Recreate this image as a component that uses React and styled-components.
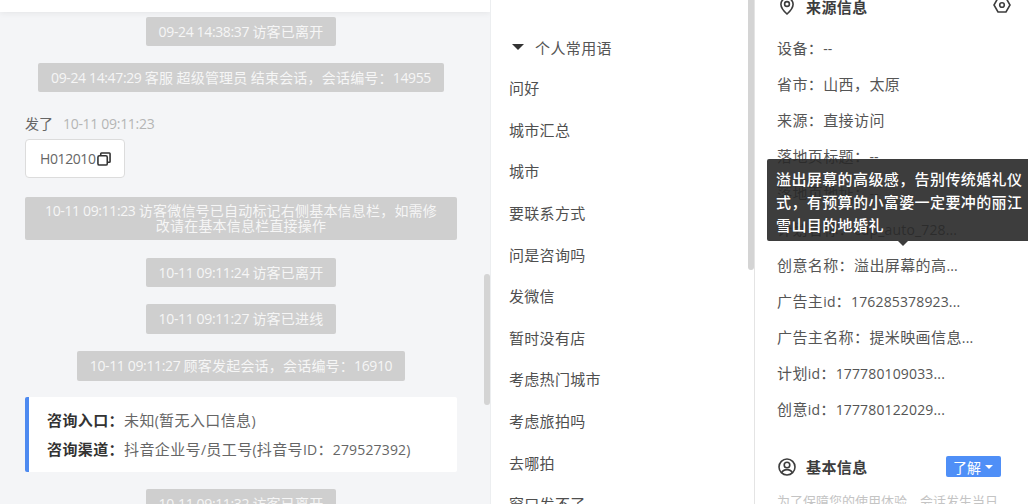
import React from "react";
import styled, { createGlobalStyle } from "styled-components";

const Global = createGlobalStyle`
  html, body { margin: 0; padding: 0; height: 504px; overflow: hidden; background: #fff; }
  #root { height: 504px; }
  * { box-sizing: border-box; }
`;
const FONT = `"Open Sans", "Noto Sans CJK SC", sans-serif`;

const Page = styled.div`
  display: flex; width: 1028px; height: 504px; overflow: hidden;
  font-family: ${FONT}; color: #4a4a4a; background: #fff;
`;
const ChatPane = styled.section`
  position: relative; width: 491px; height: 504px; flex: none; overflow: hidden;
  background: #f4f5f7; border-right: 1px solid #eceef0;
`;
const ChatHeader = styled.div`
  height: 12px; background: #fff; box-shadow: 0 1px 6px rgba(0,0,0,.07);
`;
const ChatBody = styled.div`
  display: flex; flex-direction: column; align-items: center;
  margin-left: 25px; width: 432px; padding-top: 5px;
`;
const Nums = styled.span`letter-spacing: -.36px;`;
const Latin = styled.span`font-size: 14px; letter-spacing: .15px;`;
const Pill = styled.div`
  flex: none; margin-bottom: ${p => p.$gap ?? 17}px; padding: ${p => p.$wrap ? "6px 15px 5px" : "0 13px"};
  width: ${p => p.$wrap ? "100%" : "auto"};
  line-height: ${p => p.$wrap ? "15px" : `${p.$h ?? 29}px`}; height: ${p => p.$wrap ? "43px" : `${p.$h ?? 29}px`};
  font-size: 14px; letter-spacing: .2px; text-align: center; white-space: ${p => p.$wrap ? "normal" : "nowrap"};
  color: #f6f6f6; background: #cfcfcf; border-radius: 2px;
`;
const Sender = styled.div`
  align-self: flex-start; height: 20px; line-height: 20px; margin: 1px 0 5px; font-size: 14px; color: #666;
  display: flex; gap: 10px;
`;
const Stamp = styled.span`color: #b5b5b5; letter-spacing: -.3px;`;
const CopyCard = styled.div`
  align-self: flex-start; display: flex; align-items: center; width: 100px; height: 39px; padding-left: 14px;
  margin-bottom: 19px; font-size: 14px; color: #666; background: #fff; border: 1px solid #dcdcdc; border-radius: 4px;
`;
const CopyText = styled.span`letter-spacing: -.4px; margin-right: 1px;`;
const InfoCard = styled.div`
  flex: none; width: 100%; height: 75px; margin-bottom: 17px; padding: 12px 0 0 18px; background: #fff;
  border-left: 4px solid #4d8af0; border-radius: 2px; font-size: 15px; letter-spacing: .4px; color: #666; line-height: 22px;
`;
const InfoRow = styled.div`height: 29px; white-space: nowrap;`;
const InfoKey = styled.b`font-weight: 700; color: #333;`;
const Thumb = styled.div`
  position: absolute; width: 6px; left: ${p => p.$x}px; top: ${p => p.$y}px; height: ${p => p.$h}px;
  background: #d4d4d4; border-radius: 3px;
`;

const PhrasePane = styled.section`
  position: relative; width: 264px; height: 504px; flex: none; overflow: hidden; padding-left: 18px;
  background: #fff; border-right: 1px solid #e4e4e4;
`;
const GroupTitle = styled.div`
  display: flex; align-items: center; height: 20px; margin: 37px 0 0 3px; font-size: 15px; letter-spacing: .4px; color: #555;
`;
const Caret = styled.i`
  width: 0; height: 0; margin-right: 11px; border-left: 6px solid transparent; border-right: 6px solid transparent;
  border-top: 6px solid #333;
`;
const PhraseList = styled.ul`list-style: none; margin: 11px 0 0; padding: 0;`;
const Phrase = styled.li`
  height: 41.65px; line-height: 40px; font-size: 15px; letter-spacing: .3px; color: #4f4f4f; white-space: nowrap;
`;

const InfoPane = styled.section`
  position: relative; flex: 1; height: 504px; overflow: hidden; padding-left: 22px; background: #fff;
`;
const SectionHead = styled.div`
  display: flex; align-items: center; height: 22px; padding: 0 17px 0 1px; margin-top: ${p => p.$top}px;
  font-size: 15px; letter-spacing: .4px; font-weight: 700; color: #3d3d3d;
`;
const SectionName = styled.span`margin-left: 10px; flex: 1;`;
const IconSlot = styled.span`display: flex; justify-content: center; width: 18px; flex: none;`;
const Fields = styled.div`margin-top: 21px;`;
const Field = styled.div`
  height: 36.15px; line-height: 20px; font-size: 15px; letter-spacing: .4px; color: #555; white-space: nowrap;
`;
const LearnButton = styled.button`
  display: flex; align-items: center; gap: 4px; width: 55px; height: 21px; margin-right: 10px; padding: 0 0 0 7px;
  border: 0; border-radius: 2px; background: #4f8ff7; color: #fff; font: 14px ${FONT};
`;
const SmallCaret = styled.i`
  width: 0; height: 0; border-left: 4px solid transparent; border-right: 4px solid transparent; border-top: 4px solid #fff;
`;
const Note = styled.div`margin-top: 13px; font-size: 13px; color: #c4c4c4; white-space: nowrap;`;
const Tooltip = styled.div`
  position: absolute; left: 12px; top: 159px; width: 268px; height: 82px; padding: 9px 0 0 9px;
  background: rgba(40,40,40,.9); border-radius: 2px; color: #fff; font-size: 15px; letter-spacing: .4px; font-weight: 500; line-height: 23px;
  &::after {
    content: ""; position: absolute; left: 131px; top: 82px; border-left: 5px solid transparent;
    border-right: 5px solid transparent; border-top: 5px solid #3c3c3c;
  }
`;
const TipLine = styled.div`white-space: nowrap;`;

const IconBox = styled.svg`flex: none; display: block;`;
const RaisedIcon = styled(IconBox)`margin-top: -3px;`;
const CopyIcon = () => (
  <IconBox width="14" height="14" viewBox="0 0 15 15" fill="none" stroke="#333" strokeWidth="1.7">
    <rect x="1" y="4" width="10" height="10" rx="1.5" />
    <path d="M4 4V1.8A.8.8 0 0 1 4.8 1h8.4a.8.8 0 0 1 .8.8v8.4a.8.8 0 0 1-.8.8H11" />
  </IconBox>
);
const PinIcon = () => (
  <IconBox width="14" height="18" viewBox="0 0 14 18" fill="none" stroke="#3d3d3d" strokeWidth="1.6">
    <path d="M7 17C3 13.4.9 10.4.9 7.2a6.1 6.1 0 0 1 12.2 0c0 3.2-2.1 6.2-6.1 9.8z" />
    <circle cx="7" cy="7" r="2.4" />
  </IconBox>
);
const NutIcon = () => (
  <RaisedIcon width="18" height="16" viewBox="0 0 18 16" fill="none" stroke="#3d3d3d" strokeWidth="1.6">
    <path d="M5 1h8l4 7-4 7H5L1 8z" />
    <circle cx="9" cy="8" r="2.3" />
  </RaisedIcon>
);
const UserIcon = () => (
  <IconBox width="18" height="18" viewBox="0 0 18 18" fill="none" stroke="#3d3d3d" strokeWidth="1.6">
    <circle cx="9" cy="9" r="8" />
    <circle cx="9" cy="7" r="2.8" />
    <path d="M3.6 14.8c1-2.2 3-3.2 5.4-3.2s4.4 1 5.4 3.2" />
  </IconBox>
);

const mixed = (text, Part) =>
  text.split(/([\x20-\x7e]+)/).map((s, i) => (i % 2 ? <Part key={i}>{s}</Part> : s));

const phrases = ["问好","城市汇总","城市","要联系方式","问是咨询吗","发微信","暂时没有店","考虑热门城市","考虑旅拍吗","去哪拍","窗口发不了"];
const fields = ["设备：--","省市：山西，太原","来源：直接访问","落地页标题：--","落地页地址：--","计划名称：cdp_auto_728...","创意名称：溢出屏幕的高...","广告主id：176285378923...","广告主名称：提米映画信息...","计划id：177780109033...","创意id：177780122029..."];

export default function App() {
  return (
    <Page>
      <Global />
      <ChatPane>
        <ChatHeader />
        <ChatBody>
          <Pill>{mixed("09-24 14:38:37 访客已离开", Nums)}</Pill>
          <Pill $gap={21}>{mixed("09-24 14:47:29 客服 超级管理员 结束会话，会话编号：14955", Nums)}</Pill>
          <Sender>发了<Stamp>10-11 09:11:23</Stamp></Sender>
          <CopyCard><CopyText>H012010</CopyText><CopyIcon /></CopyCard>
          <Pill $wrap $gap={18}>{mixed("10-11 09:11:23 访客微信号已自动标记右侧基本信息栏，如需修改请在基本信息栏直接操作", Nums)}</Pill>
          <Pill>{mixed("10-11 09:11:24 访客已离开", Nums)}</Pill>
          <Pill $h={30}>{mixed("10-11 09:11:27 访客已进线", Nums)}</Pill>
          <Pill $h={30} $gap={16}>{mixed("10-11 09:11:27 顾客发起会话，会话编号：16910", Nums)}</Pill>
          <InfoCard>
            <InfoRow><InfoKey>咨询入口：</InfoKey>{mixed("未知(暂无入口信息)", Latin)}</InfoRow>
            <InfoRow><InfoKey>咨询渠道：</InfoKey>{mixed("抖音企业号/员工号(抖音号ID：279527392)", Latin)}</InfoRow>
          </InfoCard>
          <Pill>{mixed("10-11 09:11:32 访客已离开", Nums)}</Pill>
        </ChatBody>
        <Thumb $x={484} $y={274} $h={131} />
      </ChatPane>
      <PhrasePane>
        <GroupTitle><Caret />个人常用语</GroupTitle>
        <PhraseList>
          {phrases.map(p => <Phrase key={p}>{p}</Phrase>)}
        </PhraseList>
        <Thumb $x={257} $y={-4} $h={274} />
      </PhrasePane>
      <InfoPane>
        <SectionHead $top={-5}><IconSlot><PinIcon /></IconSlot><SectionName>来源信息</SectionName><NutIcon /></SectionHead>
        <Fields>
          {fields.map(f => <Field key={f}>{mixed(f, Latin)}</Field>)}
        </Fields>
        <SectionHead $top={20}><IconSlot><UserIcon /></IconSlot><SectionName>基本信息</SectionName><LearnButton>了解<SmallCaret /></LearnButton></SectionHead>
        <Note>为了保障您的使用体验，会话发生当日</Note>
        <Tooltip>
          <TipLine>溢出屏幕的高级感，告别传统婚礼仪</TipLine>
          <TipLine>式，有预算的小富婆一定要冲的丽江</TipLine>
          <TipLine>雪山目的地婚礼</TipLine>
        </Tooltip>
      </InfoPane>
    </Page>
  );
}
